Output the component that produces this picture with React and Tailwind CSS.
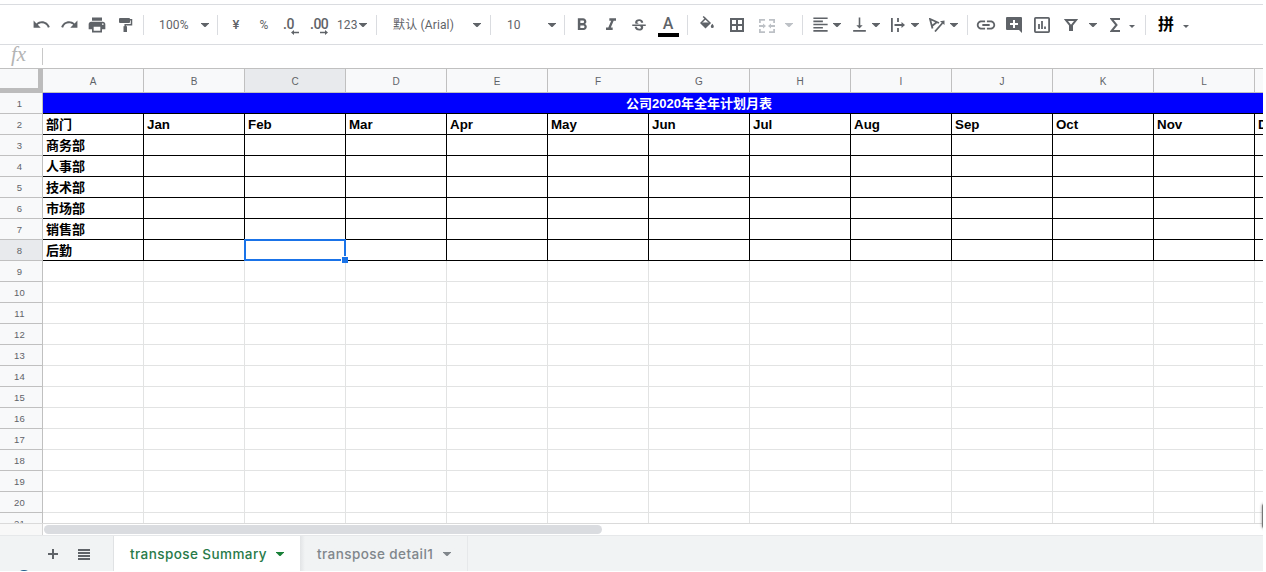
import React from "react";
import {
  MdUndo,
  MdRedo,
  MdPrint,
  MdFormatBold,
  MdFormatItalic,
  MdStrikethroughS,
  MdFormatAlignLeft,
  MdVerticalAlignBottom,
  MdLink,
} from "react-icons/md";

const COLUMNS = ["A", "B", "C", "D", "E", "F", "G", "H", "I", "J", "K", "L", "M"];
const MONTHS = ["部门", "Jan", "Feb", "Mar", "Apr", "May", "Jun", "Jul", "Aug", "Sep", "Oct", "Nov", "Dec"];
const DEPARTMENTS = { 3: "商务部", 4: "人事部", 5: "技术部", 6: "市场部", 7: "销售部", 8: "后勤" };
const ROWS = Array.from({ length: 20 }, (_, i) => i + 2);

function Cell({ className, children }) {
  return <div className={`flex h-10 shrink-0 items-center justify-center ${className}`}>{children}</div>;
}

function Label({ className, children }) {
  return <div className={`flex h-10 shrink-0 items-center whitespace-nowrap ${className}`}>{children}</div>;
}

function Sep({ className }) {
  return <div className={`h-5 w-px shrink-0 bg-[#dadce0] ${className}`} />;
}

function Caret({ className = "w-4" }) {
  return (
    <Cell className={className}>
      <svg width="8" height="4" viewBox="0 0 8 4" className="shrink-0" fill="currentColor">
        <path d="M0 0h8v.5L4.500 4h-1L0 .5z" />
      </svg>
    </Cell>
  );
}

function SmallCaret({ className }) {
  return (
    <Cell className={className}>
      <svg width="6" height="3" viewBox="0 0 6 3" className="mt-[3px]" fill="currentColor">
        <path d="M0 0h6L3 3z" />
      </svg>
    </Cell>
  );
}

function Toolbar() {
  return (
    <div className="flex h-[39px] items-center pl-[27px] text-[#5f6368]">
      <Cell className="w-7"><MdUndo size={19} /></Cell>
      <Cell className="w-7"><MdRedo size={19} /></Cell>
      <Cell className="w-7"><MdPrint size={20} className="mt-px" /></Cell>
      <Cell className="w-7">
        <svg width="14" height="14" viewBox="0 0 14 14" fill="none" className="ml-px mt-px">
          <path d="M1 0h9a1 1 0 0 1 1 1v3a1 1 0 0 1-1 1H1a1 1 0 0 1-1-1V1a1 1 0 0 1 1-1z" fill="currentColor" />
          <path d="M11 1.750h1.500v5H6.200V9" stroke="currentColor" strokeWidth="1.5" />
          <path d="M4.500 8.200H8V14H4.500z" fill="currentColor" />
        </svg>
      </Cell>
      <Sep className="ml-1" />
      <Label className="ml-[15px] w-[38px] text-xs tracking-[0.15px]">100%</Label>
      <Caret />
      <Sep className="ml-1" />
      <Cell className="ml-1 w-7 pt-px text-[13px] font-medium">¥</Cell>
      <Cell className="w-7 pt-px text-xs">%</Cell>
      <Cell className="w-[26px]">
        <div className="mt-[3px] flex h-[18px] w-4 flex-col">
          <span className="h-3 text-[14px] font-medium leading-[14px] tracking-[-0.3px]">.0</span>
          <svg width="8" height="5" viewBox="0 0 8 5" className="ml-2 mt-px shrink-0" fill="currentColor"><path d="M0 2.500 3 0v1.800h5v1.400H3V5z" /></svg>
        </div>
      </Cell>
      <Cell className="w-[30px]">
        <div className="mt-[3px] flex h-[18px] w-[18px] flex-col">
          <span className="h-3 text-[14px] font-medium leading-[14px] tracking-[-0.5px]">.00</span>
          <svg width="8" height="5" viewBox="0 0 8 5" className="ml-[10px] mt-px shrink-0" fill="currentColor"><path d="M8 2.500 5 0v1.800H0v1.400h5V5z" /></svg>
        </div>
      </Cell>
      <Label className="ml-[3px] w-[22px] pt-px text-[12px] tracking-[0.1px]">123</Label>
      <Caret className="w-2" />
      <Sep className="ml-[9px]" />
      <Label className="ml-4 w-[76px] pt-px text-xs tracking-[0.15px]">默认 (Arial)</Label>
      <Caret />
      <Sep className="ml-[5px]" />
      <Label className="ml-4 w-[37px] text-xs">10</Label>
      <Caret />
      <Sep className="ml-1" />
      <Cell className="ml-[3px] w-7"><MdFormatBold size={20} className="mt-px" /></Cell>
      <Cell className="w-7"><MdFormatItalic size={20} className="ml-px mt-px" /></Cell>
      <Cell className="w-[30px]"><MdStrikethroughS size={18} className="mt-[2px]" /></Cell>
      <Cell className="w-7">
        <div className="mt-[3px] flex w-[21px] flex-col items-center">
          <span className="h-[17px] text-base font-medium leading-4">A</span>
          <span className="h-1 w-[21px] bg-black" />
        </div>
      </Cell>
      <Sep className="ml-[5px]" />
      <Cell className="ml-[5px] w-7">
        <svg width="14" height="13" viewBox="0 0 14 13" fill="none" className="-mt-[5px]">
          <path d="M3.200.5 10 7 5.500 11.500 1 7l5-5" stroke="currentColor" strokeWidth="1.5" />
          <path d="M1 6.500h9L5.500 11.500z" fill="currentColor" />
          <path d="M12.300 7.800s1.500 1.700 1.500 2.700a1.500 1.500 0 0 1-3 0c0-1 1.500-2.700 1.500-2.700z" fill="currentColor" />
        </svg>
      </Cell>
      <Cell className="w-8">
        <svg width="14" height="14" viewBox="0 0 14 14" fill="none" stroke="currentColor" strokeWidth="2" className="-ml-px">
          <path d="M1 1h12v12H1zM7 1v12M1 7h12" />
        </svg>
      </Cell>
      <div className="flex text-[#bdc1c6]">
        <Cell className="w-7">
          <svg width="16" height="14" viewBox="0 0 16 14" fill="none" stroke="currentColor" strokeWidth="1.8" className="mt-[2px]">
            <path d="M.9 4V.9H6M10 .9h5.100V4M.9 10v3.100H6M10 13.100h5.100V10" />
            <path d="M0 7h5M16 7h-5" strokeWidth="1.8" />
            <path d="M4 4.500 7 7 4 9.500zM12 4.500 9 7l3 2.500z" fill="currentColor" stroke="none" />
          </svg>
        </Cell>
        <Caret />
      </div>
      <Sep className="ml-[5px]" />
      <Cell className="ml-1 w-[26px]"><MdFormatAlignLeft size={19} /></Cell>
      <Caret className="w-2" />
      <Cell className="ml-[5px] w-[26px]"><MdVerticalAlignBottom size={19} className="-mt-px" /></Cell>
      <Caret className="w-2" />
      <Cell className="ml-[5px] w-[26px]">
        <svg width="14" height="14" viewBox="0 0 14 14" fill="none" stroke="currentColor" strokeWidth="1.8">
          <path d="M.9 0v14M7 0v4M7 10v4M3.500 7H12" />
          <path d="M10.500 4 14 7l-3.500 3z" fill="currentColor" stroke="none" />
        </svg>
      </Cell>
      <Caret className="w-2" />
      <Cell className="ml-[5px] w-[26px]">
        <svg width="16" height="14" viewBox="0 0 16 14" fill="none" stroke="currentColor" strokeWidth="1.8">
          <path d="M3.500 10.500 1 1l9 4M3 8l5-4M6 13.500l7.500-8.500" />
          <path d="M15.500 2.500v4.600L11 3.200z" fill="currentColor" stroke="none" />
        </svg>
      </Cell>
      <Caret className="w-2" />
      <Sep className="ml-[9px]" />
      <Cell className="ml-1 w-7"><MdLink size={22} /></Cell>
      <Cell className="w-7">
        <svg width="16" height="16" viewBox="0 0 16 16" className="mt-px">
          <path d="M1 0h14a1 1 0 0 1 1 1v15l-3-3H1a1 1 0 0 1-1-1V1a1 1 0 0 1 1-1z" fill="currentColor" />
          <path d="M8 3v8M4 7h8" stroke="#fff" strokeWidth="2" />
        </svg>
      </Cell>
      <Cell className="w-7">
        <svg width="16" height="16" viewBox="0 0 16 16" fill="none" stroke="currentColor" className="mt-px">
          <rect x=".9" y=".9" width="14.200" height="14.200" rx=".8" strokeWidth="1.8" />
          <path d="M5 7v5M8 4v8M11 9.500v2.500" strokeWidth="1.8" />
        </svg>
      </Cell>
      <Cell className="w-[30px]">
        <svg width="14" height="12" viewBox="0 0 14 12" fill="none" stroke="currentColor">
          <path d="M1.800 1h10.400L8 6.200V11H6V6.200z" strokeWidth="2" />
        </svg>
      </Cell>
      <Caret className="w-[14px]" />
      <Cell className="w-[29px]">
        <svg width="10" height="14" viewBox="0 0 10 14" fill="none" stroke="currentColor" strokeWidth="2">
          <path d="M10 1H1.500L6.500 7l-5 6H10" />
        </svg>
      </Cell>
      <SmallCaret className="w-[6px]" />
      <Sep className="ml-[10px]" />
      <Cell className="ml-3 w-4 text-base font-bold text-black">拼</Cell>
      <SmallCaret className="ml-[9px] w-[6px]" />
    </div>
  );
}

function HeaderRow() {
  return (
    <div className="flex h-6 shrink-0">
      <div className="h-6 w-[43px] shrink-0 border-b-[5px] border-r-[5px] border-[#bcbcbc] bg-[#f8f9fa]" />
      {COLUMNS.map((name) => (
        <div
          key={name}
          className={`flex w-[101px] shrink-0 items-center justify-center border-b border-r border-[#c0c0c0] pt-[2px] text-[10px] text-[#5f6368] ${
            name === "C" ? "bg-[#e8eaed]" : "bg-[#f8f9fa]"
          }`}
        >
          {name}
        </div>
      ))}
    </div>
  );
}

function RowNumber({ n }) {
  return (
    <div
      className={`flex w-[43px] shrink-0 items-center justify-center border-b border-r border-[#c0c0c0] pr-[3px] pt-[2px] text-[9.5px] tracking-[0.3px] text-[#5f6368] ${
        n === 8 ? "bg-[#e8eaed]" : "bg-[#f8f9fa]"
      }`}
    >
      {n}
    </div>
  );
}

function cellText(row, col) {
  if (row === 2) return MONTHS[col];
  return col === 0 ? DEPARTMENTS[row] : null;
}

function Grid() {
  return (
    <div className="flex h-[455px] flex-col overflow-hidden border-b border-[#dadada] font-['Liberation_Sans','Noto_Sans_CJK_SC',sans-serif]">
      <HeaderRow />
      <div className="flex h-[21px] shrink-0">
        <RowNumber n={1} />
        <div className="flex w-[1313px] shrink-0 items-center justify-center border-b border-black bg-[#0000ff] pr-px pt-px text-[13px] font-bold text-white">
          公司2020年全年计划月表
        </div>
      </div>
      {ROWS.map((row) => (
        <div key={row} className="flex h-[21px] shrink-0">
          <RowNumber n={row} />
          {COLUMNS.map((name, col) => (
            <div
              key={name}
              className={`relative flex w-[101px] shrink-0 items-center border-b border-r pl-[3px] font-bold text-black ${
                col === 0 ? "pt-px text-[13px]" : "pt-[2px] text-[13.33px]"
              } ${row <= 8 ? "border-black" : "border-[#e2e3e3]"}`}
            >
              {cellText(row, col)}
              {row === 8 && name === "C" && (
                <div className="absolute -left-px -top-px z-10 h-[22px] w-[102px] border-2 border-[#1a73e8]">
                  <div className="absolute -bottom-1 -right-1 size-[7px] border-l border-t border-white bg-[#1a73e8]" />
                </div>
              )}
            </div>
          ))}
        </div>
      ))}
    </div>
  );
}

function SheetTabs() {
  return (
    <div className="relative flex h-9 overflow-hidden border-t border-[#e6e8ea] bg-[#f1f3f4] font-['Inter','Noto_Sans',sans-serif] text-[13.5px] font-medium tracking-[0.42px]">
      <div className="flex w-[114px] items-center border-r border-[#e0e2e4] pl-12 pt-px text-[#5f6368]">
        <svg width="10" height="10" viewBox="0 0 10 10" stroke="currentColor" strokeWidth="2"><path d="M5 0v10M0 5h10" /></svg>
        <svg width="12" height="11" viewBox="0 0 12 11" stroke="currentColor" strokeWidth="2" className="ml-5"><path d="M0 1h12M0 4h12M0 7h12M0 10h12" /></svg>
      </div>
      <div className="flex w-[186px] items-center bg-white pl-4 pt-px text-[#188038]">
        <span className="w-[143px] whitespace-nowrap pt-px text-[#287a49]">transpose Summary</span>
        <Caret className="ml-[3px] w-2" />
      </div>
      <div className="flex w-[168px] items-center border-r border-[#e6e8ea] bg-gradient-to-r from-[#e2e4e6] to-[#f1f3f4] to-[3%] pl-[17px] pt-px text-[#80868b]">
        <span className="w-[123px] whitespace-nowrap pt-px">transpose detail1</span>
        <Caret className="ml-[3px] w-2" />
      </div>
      <div className="absolute left-[16px] top-[34px] size-4 rounded-full bg-[#1a5a8a]" />
    </div>
  );
}

export default function App() {
  return (
    <div className="h-[572px] w-[1266px] overflow-hidden bg-white font-['Roboto','Noto_Sans_CJK_SC',sans-serif]">
      <div className="relative h-[571px] w-[1263px] overflow-hidden">
        <div className="mt-1 h-[41px] border-y border-[#dadce0]">
          <Toolbar />
        </div>
        <div className="flex h-6 border-b border-[#c0c0c0]">
          <div className="w-[42px] pl-[11px] font-['Liberation_Serif',serif] text-[21px] italic leading-[18px] text-[#b4b4b4]">fx</div>
          <div className="mt-[3px] h-[17px] w-px bg-[#c8c8c8]" />
        </div>
        <Grid />
        <div className="flex h-[11px]">
          <div className="w-[43px] border-r border-[#d5d5d5] bg-[#f8f8f8]" />
          <div className="ml-px mt-px h-[9px] w-[558px] rounded-full bg-[#dadce0]" />
        </div>
        <SheetTabs />
        <div className="absolute -right-[7px] top-[503px] h-[26px] w-2 rounded-full bg-[#777] shadow-[0_0_3px_#888]" />
      </div>
    </div>
  );
}
